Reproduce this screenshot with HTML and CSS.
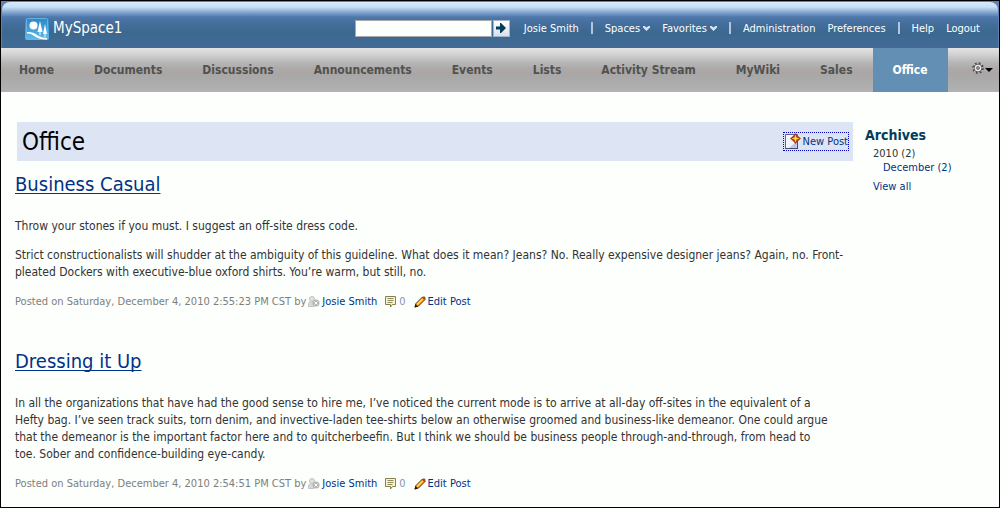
FILE: index.html
```html
<!DOCTYPE html>
<html lang="en">
<head>
    <meta charset="UTF-8">
    <meta name="viewport" content="width=device-width, initial-scale=1.0">
    <title>MySpace1 - Office</title>
    <link rel="stylesheet" href="styles.css">
</head>
<body>

<!-- shared icons -->
<svg class="sprite" width="0" height="0" aria-hidden="true">
    <symbol id="caret" viewBox="0 0 7 5">
        <path d="M0 0h1.500l2 1.500 2-1.500H7v1.500L3.500 5 0 1.500z" fill="#d3e6f8"/>
    </symbol>
    <symbol id="presence" viewBox="0 0 12 11">
        <circle cx="4" cy="3" r="2.500" fill="#e2e2e2" stroke="#c0c0c0"/>
        <path d="M.5 10.500V7.500Q1 5.500 4 5.500H6V10.500z" fill="#d8d8d8" stroke="#c4c4c4"/>
        <circle cx="8" cy="7" r="3.500" fill="#b6b6b6"/>
        <path d="M6.500 5.500l3 3m0-3l-3 3" stroke="#fff"/>
    </symbol>
    <symbol id="comment" viewBox="0 0 12 12">
        <path d="M.5 .5h10v8h-3L5.500 11V8.500h-5z" fill="#f7f4d4" stroke="#85804f"/>
        <path d="M2.500 2.500h6M2.500 4.500h6M2.500 6.500h5" stroke="#928d5c"/>
    </symbol>
    <symbol id="pencil" viewBox="0 0 12 12">
        <path d="M1 11l1-3.500L8.500 1 11 3.500 4.500 10z" fill="#f5a018" stroke="#5c2c08"/>
        <path d="M3 8.500L8.500 3" stroke="#ffe16a" stroke-width="1.200"/>
        <path d="M8 1.500L9 .5h1.500l1 1V3l-1 1z" fill="#a64a22"/>
        <path d="M.5 11.500l1-3.500L4 10.500z" fill="#2c1505"/>
    </symbol>
</svg>

<div class="top">
    <header class="banner">
        <a class="brand" href="#">
            <svg width="24" height="23" viewBox="0 0 24 23" aria-hidden="true">
                <defs>
                    <linearGradient id="sky" x1="0" y1="0" x2="0" y2="1">
                        <stop offset="0" stop-color="#2e82be"/>
                        <stop offset="1" stop-color="#59bdf0"/>
                    </linearGradient>
                </defs>
                <rect width="24" height="23" rx="2" fill="url(#sky)"/>
                <rect x="1.500" y="1.500" width="21" height="20" rx="1" fill="none" stroke="#63b4e4"/>
                <circle cx="8.500" cy="8.500" r="4" fill="#fff"/>
                <path d="M15 4l2.500 11h-5zM20 7l2 10h-4z" fill="#fff"/>
                <path d="M15 14v4M20 16v4" stroke="#fff"/>
                <path d="M2 15c6 0 7 1 10 3s6 3 10 3v1.500c-6 0-9-1-12-3s-4-3-8-3z" fill="#fff"/>
            </svg>
            <span>MySpace1</span>
        </a>

        <form class="search" onsubmit="return false">
            <input type="text" aria-label="Search">
            <button type="submit" aria-label="Go">
                <svg width="10" height="10" viewBox="0 0 10 10"><path d="M0 3.500h4V0h1l5 5-5 5H4V6.500H0z" fill="#003d5b"/></svg>
            </button>
        </form>

        <nav class="links">
            <a href="#">Josie Smith</a>
            <span class="sep"></span>
            <a href="#">Spaces <svg width="7" height="5"><use href="#caret"/></svg></a>
            <a href="#">Favorites <svg width="7" height="5"><use href="#caret"/></svg></a>
            <span class="sep"></span>
            <a href="#">Administration</a>
            <a href="#">Preferences</a>
            <span class="sep"></span>
            <a href="#">Help</a>
            <a href="#">Logout</a>
        </nav>
    </header>
</div>

<nav class="tabs">
    <a href="#">Home</a>
    <a href="#">Documents</a>
    <a href="#">Discussions</a>
    <a href="#">Announcements</a>
    <a href="#">Events</a>
    <a href="#">Lists</a>
    <a href="#">Activity Stream</a>
    <a href="#">MyWiki</a>
    <a href="#">Sales</a>
    <a href="#" class="active">Office</a>
    <button class="actions" aria-label="Page actions">
        <svg width="21" height="12" viewBox="0 0 21 12">
            <circle cx="6" cy="6" r="5" fill="#ddd" stroke="#4a4a4a" stroke-width="1.500" stroke-dasharray="2 1.930"/>
            <circle cx="6" cy="6" r="4" fill="#e8e8e8" stroke="#5a5a5a"/>
            <circle cx="6" cy="6" r="1.500" fill="#999" stroke="#777"/>
            <path d="M13 6h8l-4 4z" fill="#000"/>
        </svg>
    </button>
</nav>

<div class="page">
    <main>
        <div class="title-bar">
            <h1>Office</h1>
            <a class="new-post" href="#">
                <svg width="17" height="17" viewBox="0 0 17 17" aria-hidden="true">
                    <path d="M1.500 1.500h12v14h-12z" fill="#f4f4fd" stroke="#65658c"/>
                    <path d="M13 8v7H5z" fill="#c4c5e4"/>
                    <path d="M13.500 5v11M1 15.500h13" stroke="#4b4b70"/>
                    <path d="M11.500 0l2.500 3 3 2.500-3 2.500-2.500 3L9 8 6 5.500 9 3z" fill="#a8391c"/>
                    <path d="M11.500 1.500l1 3 3 1-3 1-1 3-1-3-3-1 3-1z" fill="#ffe13a"/>
                </svg>
                <span>New Post</span>
            </a>
        </div>

        <article>
            <h2><a href="#">Business Casual</a></h2>
            <p>Throw your stones if you must. I suggest an off-site dress code.</p>
            <p>Strict constructionalists will shudder at the ambiguity of this guideline. What does it mean? Jeans? No. Really expensive designer jeans? Again, no. Front-pleated Dockers with executive-blue oxford shirts. You’re warm, but still, no.</p>
            <div class="meta">
                <span>Posted on Saturday, December 4, 2010 2:55:23 PM CST by</span>
                <svg width="12" height="11"><use href="#presence"/></svg>
                <a class="author" href="#">Josie Smith</a>
                <svg width="12" height="12"><use href="#comment"/></svg>
                <a class="count" href="#">0</a>
                <svg width="12" height="12"><use href="#pencil"/></svg>
                <a href="#">Edit Post</a>
            </div>
        </article>

        <article>
            <h2><a href="#">Dressing it Up</a></h2>
            <p>
                In all the organizations that have had the good sense to hire me, I’ve noticed the current mode is to arrive at all-day off-sites in the equivalent of a<br>
                Hefty bag. I’ve seen track suits, torn denim, and invective-laden tee-shirts below an otherwise groomed and business-like demeanor. One could argue<br>
                that the demeanor is the important factor here and to quitcherbeefin. But I think we should be business people through-and-through, from head to<br>
                toe. Sober and confidence-building eye-candy.
            </p>
            <div class="meta">
                <span>Posted on Saturday, December 4, 2010 2:54:51 PM CST by</span>
                <svg width="12" height="11"><use href="#presence"/></svg>
                <a class="author" href="#">Josie Smith</a>
                <svg width="12" height="12"><use href="#comment"/></svg>
                <a class="count" href="#">0</a>
                <svg width="12" height="12"><use href="#pencil"/></svg>
                <a href="#">Edit Post</a>
            </div>
        </article>
    </main>

    <aside>
        <h3>Archives</h3>
        <ul>
            <li>2010 (2)</li>
            <li class="month"><a href="#">December (2)</a></li>
            <li class="all"><a href="#">View all</a></li>
        </ul>
    </aside>
</div>

</body>
</html>
```
FILE: styles.css
```css
* {
    box-sizing: border-box;
}
body {
    margin: 0;
    min-height: 100vh;
    border: 1px solid #000;
    background: #fcfffc;
    color: #333;
    font-family: Tahoma, "DejaVu Sans Condensed", "Noto Sans", sans-serif;
    font-size: 12px;
}
a {
    color: #003286;
    text-decoration: none;
}
a:hover {
    text-decoration: underline;
}
.sprite {
    display: block;
    height: 0;
}

/* top banner */
.top {
    padding: 1px 1px 0;
    background: #5f82b0;
}
.banner {
    display: flex;
    align-items: center;
    height: 46px;
    padding: 6px 18px 0 23px;
    border-radius: 8px 8px 0 0;
    background: linear-gradient(#d8ebff 0, #c8dff6 5px, #7ba0c8 11px, #5078ac 15px, #45709f 20px, #3c688f 30px, #416b96 44px, #4c6592 46px);
}
.brand {
    display: flex;
    align-items: center;
    gap: 4px;
    color: #fff;
    font-size: 15px;
}
.search {
    display: flex;
    gap: 1px;
    margin-left: auto;
}
.search input {
    width: 137px;
    height: 17px;
    padding: 0 2px;
    border: 1px solid #a9a9a9;
    background: #fcfffc;
}
.search button {
    display: flex;
    align-items: center;
    justify-content: center;
    width: 17px;
    height: 17px;
    padding: 0;
    border: 1px solid #a5b3c9;
    background: linear-gradient(#fff, #d9dfeb);
}
.links {
    display: flex;
    align-items: center;
    gap: 12px;
    margin-left: 14px;
    font-size: 11px;
}
.links a {
    color: #fff;
}
.links svg {
    vertical-align: 1px;
}
.sep {
    width: 2px;
    height: 12px;
    background: #b5c5dc;
}

/* tabs */
.tabs {
    display: flex;
    height: 44px;
    background: linear-gradient(#e4e2e5 0, #d6d6d6 5px, #b8b8b8 14px, #aeaaaa 20px, #aaa6a5 26px, #a8a8a8 28px, #b2b2b2 44px);
}
.tabs a {
    padding: 0 20px;
    color: #505250;
    font-size: 12px;
    font-weight: bold;
    line-height: 44px;
}
.tabs a:first-child {
    padding-left: 18px;
}
.tabs .active {
    background: #648fb5;
    color: #fff;
}
.actions {
    margin-left: auto;
    padding: 0 6px 2px;
    border: 0;
    background: none;
}

/* content */
.page {
    display: flex;
    gap: 12px;
    padding: 30px 16px 0 14px;
}
main {
    flex: 1;
}
.title-bar {
    display: flex;
    align-items: center;
    justify-content: space-between;
    height: 39px;
    margin-left: 2px;
    padding: 0 4px 0 5px;
    background: #dde5f5;
}
h1 {
    margin: 0;
    color: #000;
    font-size: 24px;
    font-weight: normal;
}
.new-post {
    display: flex;
    align-items: center;
    gap: 2px;
    border: 1px dotted #00c;
    font-size: 11px;
}
article {
    margin-bottom: 28px;
}
article:last-child {
    margin-bottom: 12px;
}
h2 {
    margin: 0 0 11px;
    font-size: 20px;
    font-weight: normal;
    line-height: 46px;
}
h2 a {
    text-decoration: underline;
    text-decoration-thickness: 1px;
    text-underline-offset: 2px;
    text-decoration-skip-ink: none;
}
article p {
    margin: 0 0 12px;
    line-height: 17px;
}
.meta {
    display: flex;
    align-items: center;
    gap: 2px;
    height: 17px;
    color: #7e7e7e;
    font-size: 11px;
}
.author,
.count {
    margin-right: 6px;
}
.meta .count {
    color: #8494ae;
}

/* archives */
aside {
    width: 118px;
    font-size: 11px;
}
h3 {
    margin: 5px 0 3px;
    color: #003d5b;
    font-size: 14px;
    line-height: 17px;
}
aside ul {
    margin: 0;
    padding: 0 0 0 8px;
    list-style: none;
    line-height: 14px;
}
.month {
    padding-left: 10px;
}
.all {
    margin-top: 5px;
}
```
